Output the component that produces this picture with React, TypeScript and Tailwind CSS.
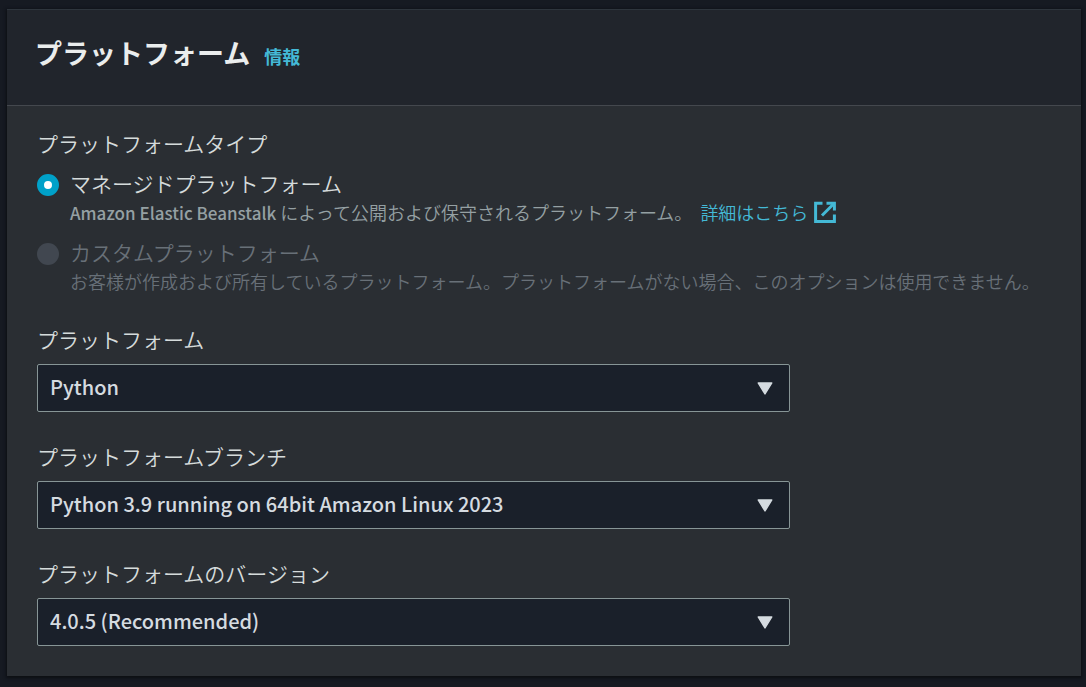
import { useId, useState } from "react";

function ExternalIcon() {
  return (
    <svg
      aria-hidden="true"
      viewBox="0 0 22 22"
      className="size-[22px] shrink-0"
      fill="none"
      stroke="currentColor"
      strokeWidth="3"
    >
      <path d="M8.5 2.2H1.6V20.4H20.4V13.5" />
      <path d="M12.5 2.2H20.4V9.5" />
      <path d="M20 2.5L8 14.5" />
    </svg>
  );
}

function SelectField({ label, options }: { label: string; options: string[] }) {
  const id = useId();
  return (
    <div className="flex w-full max-w-[753px] flex-col gap-2.5">
      <label htmlFor={id} className="text-[21px] leading-[29px] font-[350] text-[#d5dbdb]">
        {label}
      </label>
      <div className="grid items-center">
        <select
          id={id}
          className="col-start-1 row-start-1 h-12 w-full appearance-none rounded-[2px] border border-[#879596] bg-[#1a202a] pr-12 pb-0.5 pl-3 text-xl font-medium text-[#d5dbe0] outline-none focus:border-[#00a1c9]"
        >
          {options.map((option) => (
            <option key={option}>{option}</option>
          ))}
        </select>
        <svg
          aria-hidden="true"
          viewBox="0 0 16 13"
          className="pointer-events-none col-start-1 row-start-1 mr-[17px] h-[13px] w-4 justify-self-end"
        >
          <path
            d="M1.2 1H14.8L8 12Z"
            fill="#d5dbe0"
            stroke="#d5dbe0"
            strokeWidth="1.4"
            strokeLinejoin="round"
          />
        </svg>
      </div>
    </div>
  );
}

const radioClass =
  "mt-1.5 size-[22px] shrink-0 appearance-none rounded-full border border-[#879596] bg-[#1a202a] checked:border-[7px] checked:border-[#00a1c9] checked:bg-white disabled:border-0 disabled:bg-[#414750]";

export default function App() {
  const [type, setType] = useState("managed");
  return (
    <main className="min-h-screen bg-[#161a22] pt-[9px] pr-[5px] pb-[11px] pl-[7px] font-['Noto_Sans_CJK_JP',sans-serif] text-[#d5dbdb]">
      <section className="border-t border-[#2e353d] bg-[#2a2e33] shadow-[0_1px_3px_1px_#0c0f13]">
        <header className="flex items-baseline gap-3.5 border-b border-[#44484e] bg-[#21252c] px-7 pt-[23px] pb-8">
          <h1 className="text-[27px] leading-10 font-bold text-[#eaeded]">プラットフォーム</h1>
          <a href="#info" className="text-lg leading-7 font-bold text-[#44b9d6]">
            情報
          </a>
        </header>
        <div className="flex flex-col gap-[30px] px-[30px] pt-[21px] pb-[30px]">
          <fieldset className="min-w-0">
            <legend className="mb-[9px] text-[21px] leading-8 font-[350]">
              プラットフォームタイプ
            </legend>
            <div className="flex flex-col gap-2.5">
              <div className="flex gap-[11px]">
                <input
                  id="managed"
                  type="radio"
                  name="platform-type"
                  checked={type === "managed"}
                  onChange={() => setType("managed")}
                  className={radioClass}
                />
                <div className="min-w-0">
                  <label htmlFor="managed" className="block text-[21px] leading-[30px] font-[350]">
                    マネージドプラットフォーム
                  </label>
                  <p className="text-lg leading-7 font-[350] text-[#95a0a3]">
                    <span className="text-[17px] font-medium">Amazon Elastic Beanstalk</span>{" "}
                    によって公開および保守されるプラットフォーム。{" "}
                    <a
                      href="#details"
                      className="ml-1 inline-flex items-center gap-1.5 align-top text-[#44b9d6]"
                    >
                      詳細はこちら
                      <ExternalIcon />
                    </a>
                  </p>
                </div>
              </div>
              <div className="flex gap-[11px]">
                <input
                  id="custom"
                  type="radio"
                  name="platform-type"
                  disabled
                  checked={type === "custom"}
                  onChange={() => setType("custom")}
                  className={radioClass}
                />
                <div className="min-w-0 text-[#687078]">
                  <label htmlFor="custom" className="block text-[21px] leading-[30px] font-[350]">
                    カスタムプラットフォーム
                  </label>
                  <p className="text-lg leading-7 font-[350]">
                    お客様が作成および所有しているプラットフォーム。プラットフォームがない場合、このオプションは使用できません。
                  </p>
                </div>
              </div>
            </div>
          </fieldset>
          <div className="flex flex-col gap-[30px]">
            <SelectField label="プラットフォーム" options={["Python"]} />
            <SelectField
              label="プラットフォームブランチ"
              options={["Python 3.9 running on 64bit Amazon Linux 2023"]}
            />
            <SelectField label="プラットフォームのバージョン" options={["4.0.5 (Recommended)"]} />
          </div>
        </div>
      </section>
    </main>
  );
}
